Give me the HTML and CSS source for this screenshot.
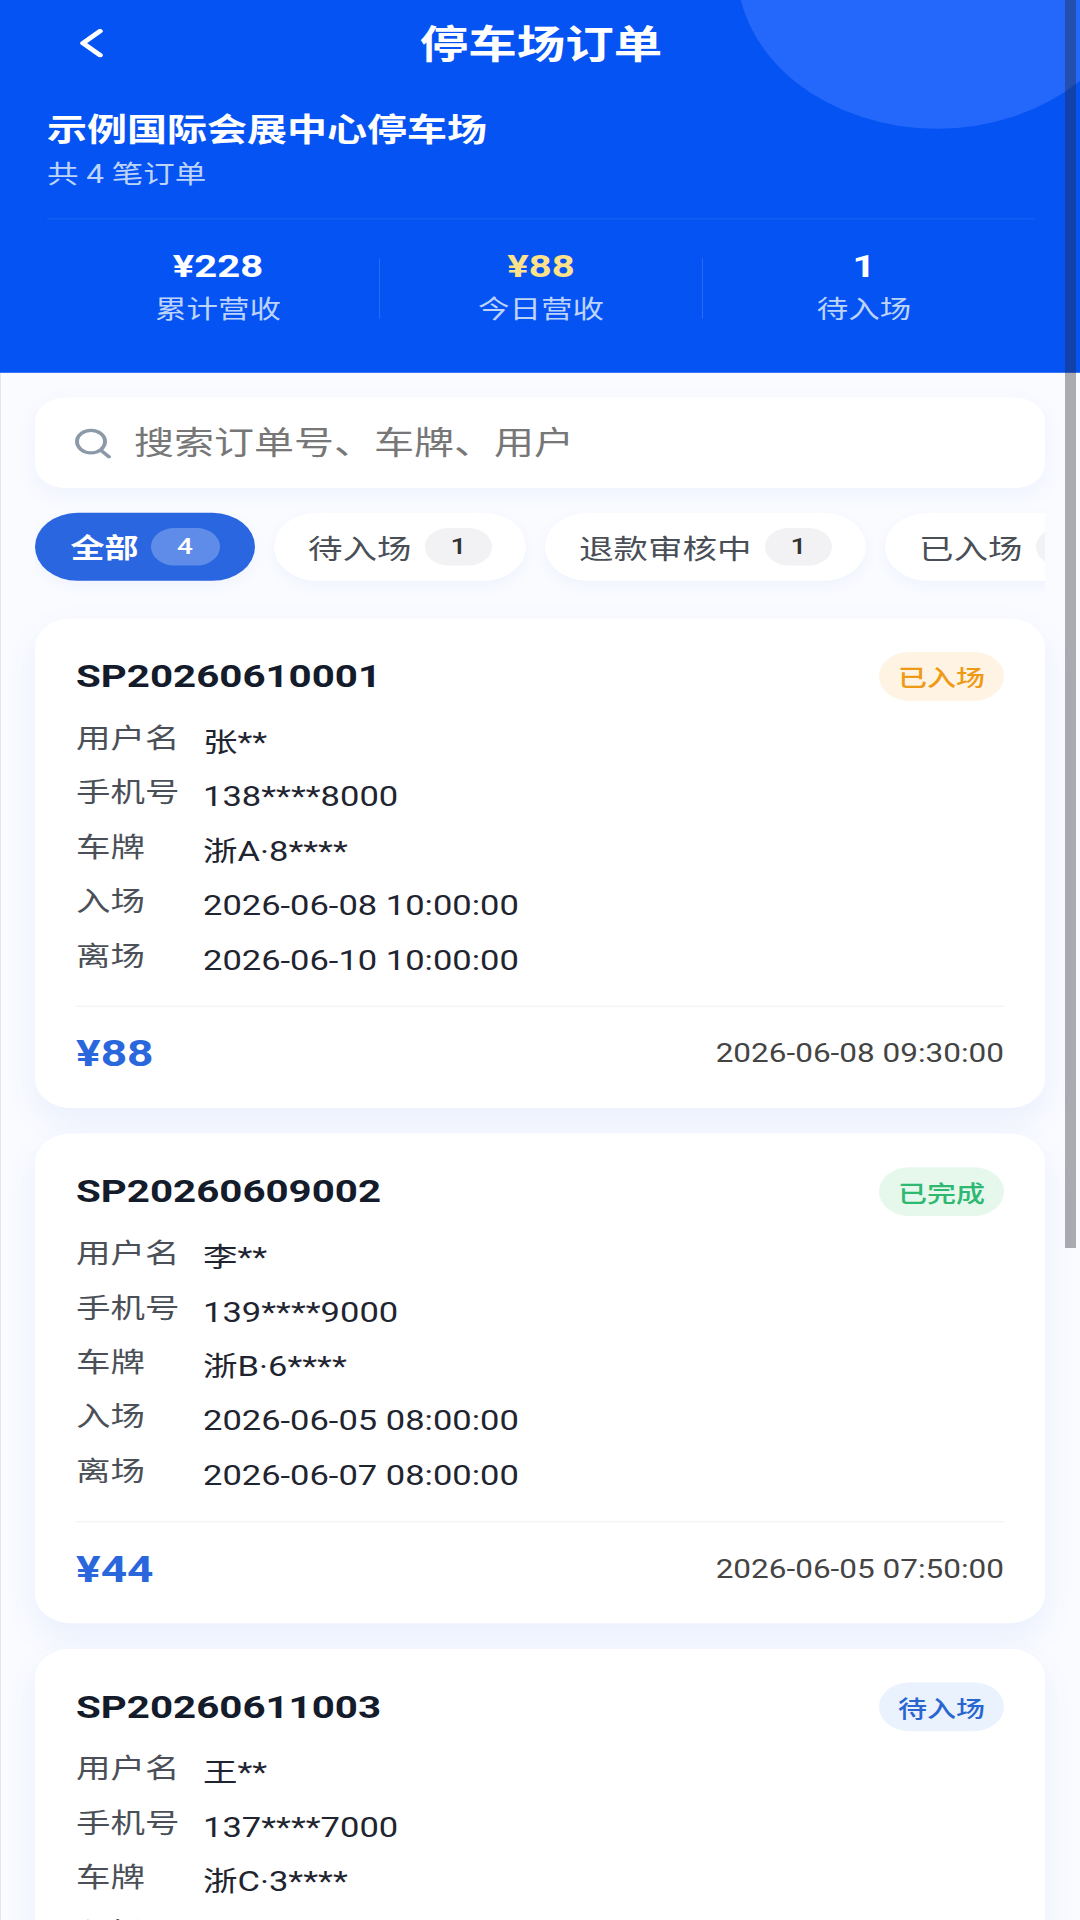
FILE: index.html
```html
<!DOCTYPE html>
<html lang="zh-CN">
<head>
  <meta charset="UTF-8" />
  <meta name="viewport" content="width=device-width,initial-scale=1.0">
  <title>停车场订单</title>
  <link rel="stylesheet" href="styles.css">
</head>
<body>
  <div class="app">
    <header class="header">
      <div class="header-circle"></div>
      <div class="nav">
        <svg class="nav-back" viewBox="0 0 24 36" width="24" height="36"><path d="M21 3 L4 18 L21 33" fill="none" stroke="#fff" stroke-width="5.5" stroke-linecap="round" stroke-linejoin="round"/></svg>
        <div class="nav-title">停车场订单</div>
      </div>
      <div class="station">示例国际会展中心停车场</div>
      <div class="station-sub">共 4 笔订单</div>
      <div class="stats">
        <div class="stat">
          <div class="stat-value">¥228</div>
          <div class="stat-label">累计营收</div>
        </div>
        <div class="stat-sep"></div>
        <div class="stat">
          <div class="stat-value gold">¥88</div>
          <div class="stat-label">今日营收</div>
        </div>
        <div class="stat-sep"></div>
        <div class="stat">
          <div class="stat-value">1</div>
          <div class="stat-label">待入场</div>
        </div>
      </div>
    </header>

    <main class="content">
      <div class="search">
        <svg class="search-icon" viewBox="0 0 38 38" width="38" height="38"><circle cx="17" cy="17" r="14" fill="none" stroke="#8c9aa8" stroke-width="4"/><path d="M27 28 L35 36" stroke="#8c9aa8" stroke-width="4" stroke-linecap="round"/></svg>
        <span class="search-text">搜索订单号、车牌、用户</span>
      </div>

      <div class="tabs">
        <div class="tab active">全部<span class="tab-count">4</span></div>
        <div class="tab">待入场<span class="tab-count">1</span></div>
        <div class="tab">退款审核中<span class="tab-count">1</span></div>
        <div class="tab">已入场<span class="tab-count">1</span></div>
      </div>

      <section class="card">
        <div class="card-head">
          <div class="order-no">SP20260610001</div>
          <div class="status orange">已入场</div>
        </div>
        <div class="row"><div class="row-label">用户名</div><div class="row-value">张**</div></div>
        <div class="row"><div class="row-label">手机号</div><div class="row-value">138****8000</div></div>
        <div class="row"><div class="row-label">车牌</div><div class="row-value">浙A·8****</div></div>
        <div class="row"><div class="row-label">入场</div><div class="row-value">2026-06-08 10:00:00</div></div>
        <div class="row"><div class="row-label">离场</div><div class="row-value">2026-06-10 10:00:00</div></div>
        <div class="card-foot">
          <div class="price">¥88</div>
          <div class="time">2026-06-08 09:30:00</div>
        </div>
      </section>

      <section class="card">
        <div class="card-head">
          <div class="order-no">SP20260609002</div>
          <div class="status green">已完成</div>
        </div>
        <div class="row"><div class="row-label">用户名</div><div class="row-value">李**</div></div>
        <div class="row"><div class="row-label">手机号</div><div class="row-value">139****9000</div></div>
        <div class="row"><div class="row-label">车牌</div><div class="row-value">浙B·6****</div></div>
        <div class="row"><div class="row-label">入场</div><div class="row-value">2026-06-05 08:00:00</div></div>
        <div class="row"><div class="row-label">离场</div><div class="row-value">2026-06-07 08:00:00</div></div>
        <div class="card-foot">
          <div class="price">¥44</div>
          <div class="time">2026-06-05 07:50:00</div>
        </div>
      </section>

      <section class="card">
        <div class="card-head">
          <div class="order-no">SP20260611003</div>
          <div class="status blue">待入场</div>
        </div>
        <div class="row"><div class="row-label">用户名</div><div class="row-value">王**</div></div>
        <div class="row"><div class="row-label">手机号</div><div class="row-value">137****7000</div></div>
        <div class="row"><div class="row-label">车牌</div><div class="row-value">浙C·3****</div></div>
        <div class="row"><div class="row-label">入场</div></div>
      </section>
    </main>
  </div>

  <div class="scroll-thumb"></div>
</body>
</html>
```

FILE: styles.css
```css
html, body {
  margin: 0;
  padding: 0;
  height: 100vh;
  overflow: hidden;
  background-color: #fafbff;
  font-family: Roboto, "Noto Sans CJK SC", sans-serif;
}

/* the capture is squeezed from a 1080x2400 phone screen */
.app {
  width: 1080px;
  height: 2400px;
  overflow: hidden;
  transform: scaleY(0.8);
  transform-origin: top left;
}

.header {
  position: relative;
  overflow: hidden;
  height: 466px;
  box-sizing: border-box;
  padding: 0 45px 0 47px;
  background-color: #0653f3;
  color: #fff;
}

.header-circle {
  position: absolute;
  top: -239px;
  right: -57px;
  width: 400px;
  height: 400px;
  border-radius: 50%;
  background-color: #2468fb;
}

.nav {
  position: relative;
  display: flex;
  align-items: center;
  height: 108px;
}

.nav-back {
  margin-left: 32px;
}

.nav-title {
  position: absolute;
  left: 0;
  right: 0;
  top: 26px;
  text-align: center;
  font-size: 48.5px;
  line-height: 60px;
  font-weight: 700;
}

.station {
  position: relative;
  margin-top: 27px;
  font-size: 40px;
  line-height: 56px;
  font-weight: 700;
}

.station-sub {
  margin-top: 6px;
  font-size: 31.5px;
  line-height: 44px;
  color: #bcd3fb;
}

.stats {
  display: flex;
  align-items: center;
  margin-top: 32px;
  padding: 32px 10px 0;
  border-top: 1px solid rgba(255, 255, 255, 0.12);
}

.stat {
  flex: 1;
  text-align: center;
}

.stat-value {
  font-size: 40px;
  line-height: 54px;
  font-weight: 700;
}

.stat-value.gold {
  color: #fde28a;
}

.stat-label {
  font-size: 31.5px;
  line-height: 54px;
  color: #bcd3fb;
}

.stat-sep {
  width: 1px;
  height: 75px;
  background-color: rgba(255, 255, 255, 0.14);
}

.content {
  padding: 31px 35px 0;
  box-shadow: inset 1px 0 #e6e6ea;
}

.search {
  display: flex;
  align-items: center;
  gap: 22px;
  height: 113px;
  padding-left: 39px;
  border-radius: 30px;
  background-color: #fff;
  box-shadow: 0 8px 24px rgba(37, 99, 235, 0.06);
  font-size: 40px;
  color: #777;
}

.search-text {
  margin-bottom: 8px;
}

.tabs {
  display: flex;
  gap: 19px;
  margin-top: 11px;
  padding: 20px 0 24px;
  overflow: hidden;
}

.tab {
  display: flex;
  flex: none;
  align-items: center;
  gap: 13.5px;
  height: 85px;
  padding: 0 34px;
  border-radius: 43px;
  background-color: #fff;
  box-shadow: 0 6px 16px rgba(37, 99, 235, 0.05);
  font-size: 34.5px;
  color: #4a4f57;
}

.tab-count {
  width: 67px;
  height: 47px;
  border-radius: 24px;
  background-color: #f2f2f4;
  font-size: 28px;
  font-weight: 500;
  line-height: 47px;
  text-align: center;
  color: #333;
}

.tab.active {
  gap: 12px;
  padding: 0 35.5px;
  font-size: 34px;
  background-color: #2a66e0;
  font-weight: 700;
  color: #fff;
}

.tab.active .tab-count {
  width: 69px;
  background-color: rgba(255, 255, 255, 0.25);
  color: #fff;
}

.card {
  margin-top: 23px;
  margin-bottom: 32px;
  height: 612px;
  box-sizing: border-box;
  padding: 42px 41px 0;
  border-radius: 36px;
  background-color: #fff;
  box-shadow: 0 16px 36px rgba(37, 99, 235, 0.08);
}

.card + .card {
  margin-top: 0;
}

.card-head {
  display: flex;
  align-items: center;
  justify-content: space-between;
  height: 61px;
  margin-bottom: 22px;
}

.order-no {
  font-size: 40.3px;
  font-weight: 700;
  color: #141b2b;
}

.status {
  height: 61px;
  padding: 0 19px;
  border-radius: 31px;
  font-size: 29px;
  font-weight: 500;
  line-height: 66px;
}

.status.orange {
  background-color: #fff3e3;
  color: #ef9a16;
}

.status.green {
  background-color: #e6f8ec;
  color: #2eb872;
}

.status.blue {
  background-color: #eaf2fd;
  color: #2a66d0;
}

.row {
  display: flex;
  height: 68px;
  font-size: 34.5px;
  line-height: 50px;
}

.row-label {
  width: 127px;
  color: #4b5058;
}

.row-value {
  padding-top: 5px;
  color: #1f2530;
}

.card-foot {
  display: flex;
  align-items: center;
  justify-content: space-between;
  height: 116px;
  margin-top: 19px;
  border-top: 2px solid #f3f5f8;
}

.price {
  font-size: 46px;
  font-weight: 700;
  color: #2a66dc;
}

.time {
  font-size: 31.5px;
  color: #444;
}

/* overlay scrollbar, sits on top of everything */
.scroll-thumb {
  position: absolute;
  top: 0;
  left: 1065px;
  width: 11px;
  height: 1248px;
  background-color: rgba(40, 40, 50, 0.38);
}
```
